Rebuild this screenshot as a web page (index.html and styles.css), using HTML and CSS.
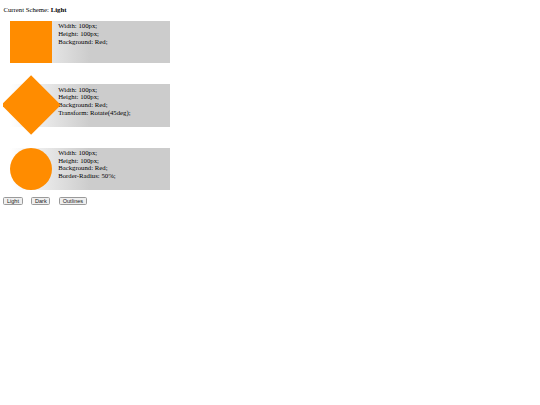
FILE: index.html
```html
<!DOCTYPE html>
<html>
<head>
<meta charset="utf-8">
<link rel="stylesheet" href="styles.css">
</head>
<body>
<div class="scheme">Current Scheme: <b>Light</b></div>
<div class="rows">
  <div class="row">
    <div class="shape square"></div>
    <div class="desc">Width: 100px;<br>Height: 100px;<br>Background: Red;</div>
  </div>
  <div class="row">
    <div class="shape diamond"></div>
    <div class="desc">Width: 100px;<br>Height: 100px;<br>Background: Red;<br>Transform: Rotate(45deg);</div>
  </div>
  <div class="row">
    <div class="shape circle"></div>
    <div class="desc">Width: 100px;<br>Height: 100px;<br>Background: Red;<br>Border-Radius: 50%;</div>
  </div>
</div>
<div class="buttons">
  <button class="btn">Light</button>
  <button class="btn">Dark</button>
  <button class="btn">Outlines</button>
</div>
</body>
</html>
```
FILE: styles.css
```css
html {
  background: #fff;
}
body {
  margin: 3.4px;
  font-family: "Liberation Serif", "Times New Roman", serif;
  font-size: 6.75px;
  color: #000;
}
.scheme {
  margin-top: 2.5px;
  line-height: 7.6px;
}
.rows {
  display: flex;
  flex-direction: column;
  gap: 21.1px;
  margin-top: 7.6px;
  margin-left: 6.75px;
}
.row {
  display: flex;
  width: 160.3px;
  height: 42.2px;
  background: linear-gradient(to right, #fff 0%, #ccc 50%);
}
.shape {
  flex: none;
  width: 42.2px;
  height: 42.2px;
  background: #ff8c00;
}
.diamond {
  transform: rotate(45deg);
}
.circle {
  border-radius: 50%;
}
.desc {
  margin-left: 5.9px;
  padding-top: 1.3px;
  line-height: 7.76px;
}
.buttons {
  display: flex;
  gap: 8.9px;
  margin-top: 6.75px;
}
.btn {
  font-family: "Liberation Sans", Arial, sans-serif;
  font-size: 5.6px;
  line-height: 7px;
  padding: 0.5px 2.5px;
  height: 8.9px;
  border: 0.5px solid #9a9a9a;
  border-radius: 1.6px;
  background: #efefef;
  color: #222;
}
```
